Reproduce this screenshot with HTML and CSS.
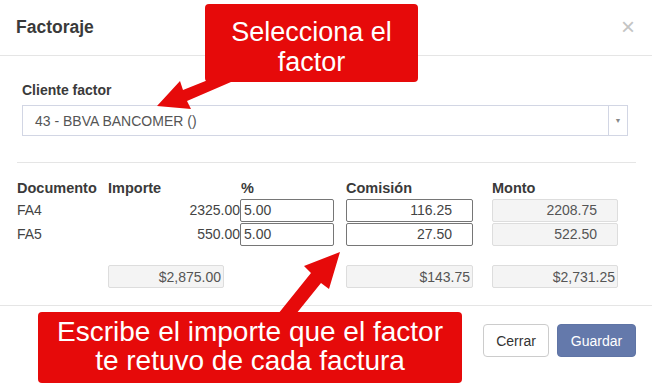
FILE: index.html
```html
<!DOCTYPE html>
<html lang="es">
  <head>
    <meta charset="UTF-8" />
    <title>Factoraje</title>
    <link rel="stylesheet" href="styles.css">
  </head>
  <body>
    <div class="modal">
      <!-- Header -->
      <div class="modal-header">
        <h4 class="modal-title">Factoraje</h4>
        <span class="close">&times;</span>
      </div>

      <!-- Body -->
      <div class="modal-body">
        <div class="form-group">
          <label>Cliente factor</label>
          <div class="select">
            <span class="select-text">43 - BBVA BANCOMER ()</span>
            <span class="select-arrow">&#9660;</span>
          </div>
        </div>
        <hr>

        <div class="grid">
          <div class="th">Documento</div>
          <div class="th">Importe</div>
          <div class="th th-pct">%</div>
          <div class="th">Comisión</div>
          <div class="th">Monto</div>

          <div class="td">FA4</div>
          <div class="td num">2325.00</div>
          <div class="td"><input class="inp inp-pct" value="5.00"></div>
          <div class="td"><input class="inp inp-com" value="116.25"></div>
          <div class="td"><div class="ro ro-row">2208.75</div></div>

          <div class="td">FA5</div>
          <div class="td num">550.00</div>
          <div class="td"><input class="inp inp-pct" value="5.00"></div>
          <div class="td"><input class="inp inp-com" value="27.50"></div>
          <div class="td"><div class="ro ro-row">522.50</div></div>
        </div>

        <div class="grid totals">
          <div></div>
          <div><div class="ro ro-tot ro-imp">$2,875.00</div></div>
          <div></div>
          <div><div class="ro ro-tot">$143.75</div></div>
          <div><div class="ro ro-tot ro-monto">$2,731.25</div></div>
        </div>
      </div>

      <!-- Footer -->
      <div class="modal-footer">
        <button class="btn btn-default">Cerrar</button>
        <button class="btn btn-primary">Guardar</button>
      </div>
    </div>

    <!-- Callouts -->
    <svg class="arrows" width="652" height="387" viewBox="0 0 652 387">
      <polygon points="157,106 180,81 183,90 208,80 231,82 187,101 191,109" />
      <polygon points="340,252 329,289 321,283 296,314 278,314 311,273 304,266" />
    </svg>
    <div class="callout callout-top">Selecciona el<br>factor</div>
    <div class="callout callout-bottom">Escribe el importe que el factor<br>te retuvo de cada factura</div>
  </body>
</html>
```

FILE: styles.css
```css
/* ---------- Base ---------- */
*{box-sizing:border-box;margin:0;padding:0;}
html,body{height:100%;}
body{background:#fff;font-family:"Liberation Sans",Arial,sans-serif;font-size:14px;color:#444;position:relative;overflow:hidden;}

/* ---------- Modal ---------- */
.modal{width:652px;}
.modal-header{height:56px;padding:0 17px 0 16px;display:flex;align-items:center;justify-content:space-between;border-bottom:1px solid #e5e5e5;}
.modal-title{font-size:17.5px;font-weight:700;color:#3a3a3a;}
.close{font-size:24px;color:#c4c4c4;line-height:1;margin-top:-2px;}

.modal-body{padding:24px 16px 0 17px;}
.form-group{padding:0 8px 0 5px;}
.form-group label{display:block;font-weight:700;color:#3a3a3a;line-height:20px;margin-bottom:5px;}
.select{height:31px;border:1px solid #d2d6e4;display:flex;align-items:center;}
.select-text{flex:1;padding-left:12px;color:#555;}
.select-arrow{width:19px;height:100%;border-left:1px solid #d2d6e4;display:flex;align-items:center;justify-content:center;font-size:7px;color:#888;}

hr{border:0;border-top:1px solid #e5e5e5;margin:26px 0 15px;}

/* ---------- Grid ---------- */
.grid{display:grid;grid-template-columns:91px 132px 106px 146px 126px;}
.th{font-weight:700;color:#3a3a3a;line-height:20px;font-size:14.5px;}
.th-pct{padding-left:1px;}
.td{height:24px;display:flex;align-items:center;color:#444;}
.num{justify-content:flex-end;}
.inp{height:23px;border:1px solid #767676;border-radius:2px;font:14px "Liberation Sans",Arial,sans-serif;color:#444;background:#fff;outline:none;}
.inp-pct{width:94px;padding:0 3px;}
.inp-com{width:127px;padding:0 20px 0 3px;text-align:right;}
.ro{height:23px;background:#f4f4f4;border:1px solid #ddd;border-radius:2px;display:flex;align-items:center;justify-content:flex-end;color:#555;}
.ro-row{width:126px;padding-right:20px;}
.ro-tot{width:127px;padding-right:2px;}
.ro-imp{width:116px;}
.ro-monto{width:126px;}
.totals{margin-top:19px;}

/* ---------- Footer ---------- */
.modal-footer{margin-top:17px;border-top:1px solid #e5e5e5;padding:18px 16px 0 0;display:flex;justify-content:flex-end;gap:8px;}
.btn{height:33px;padding:0 12px;border-radius:4px;font:14px "Liberation Sans",Arial,sans-serif;}
.btn-default{width:66px;background:#fff;border:1px solid #ccc;color:#333;}
.btn-primary{width:79px;background:#6479ab;border:1px solid #5f74a5;color:#fff;}

/* ---------- Callouts ---------- */
.arrows{position:absolute;left:0;top:0;pointer-events:none;}
.arrows polygon{fill:#e60a0a;}
.callout{position:absolute;background:#e60a0a;color:#fff;border-radius:4px;text-align:center;font-family:"Liberation Sans",Arial,sans-serif;}
.callout-top{left:205px;top:4px;width:213px;height:78px;padding-top:13px;font-size:27px;line-height:30px;}
.callout-bottom{left:38px;top:312px;width:424px;height:71px;padding-top:5px;font-size:28px;line-height:29px;}
```
